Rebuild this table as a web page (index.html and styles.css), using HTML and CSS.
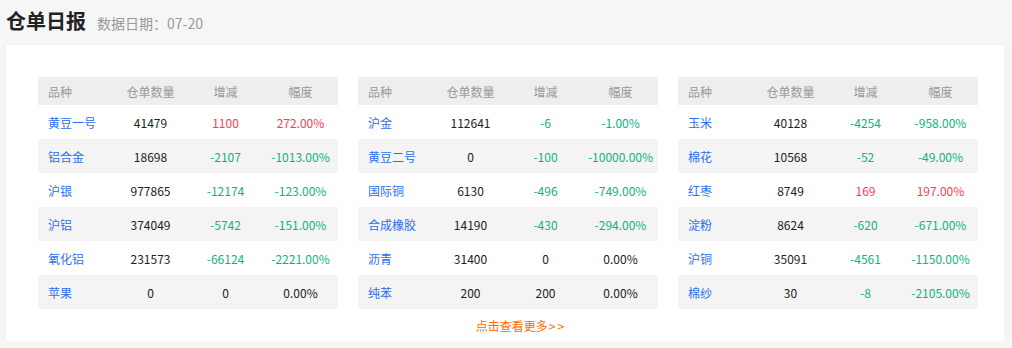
FILE: index.html
```html
<!DOCTYPE html>
<html lang="zh-CN">
<head>
<meta charset="utf-8">
<title>仓单日报</title>
<link rel="stylesheet" href="styles.css">
</head>
<body>
<div class="page">
  <div class="head">
    <h1 class="title">仓单日报</h1>
    <span class="date">数据日期：07-20</span>
  </div>
  <div class="card">
    <div class="tables">
      <table class="tb">
        <thead><tr><th>品种</th><th>仓单数量</th><th>增减</th><th>幅度</th></tr></thead>
        <tbody>
          <tr><td class="name">黄豆一号</td><td>41479</td><td class="up">1100</td><td class="up">272.00%</td></tr>
          <tr><td class="name">铝合金</td><td>18698</td><td class="down">-2107</td><td class="down">-1013.00%</td></tr>
          <tr><td class="name">沪银</td><td>977865</td><td class="down">-12174</td><td class="down">-123.00%</td></tr>
          <tr><td class="name">沪铝</td><td>374049</td><td class="down">-5742</td><td class="down">-151.00%</td></tr>
          <tr><td class="name">氧化铝</td><td>231573</td><td class="down">-66124</td><td class="down">-2221.00%</td></tr>
          <tr><td class="name">苹果</td><td>0</td><td>0</td><td>0.00%</td></tr>
        </tbody>
      </table>
      <table class="tb">
        <thead><tr><th>品种</th><th>仓单数量</th><th>增减</th><th>幅度</th></tr></thead>
        <tbody>
          <tr><td class="name">沪金</td><td>112641</td><td class="down">-6</td><td class="down">-1.00%</td></tr>
          <tr><td class="name">黄豆二号</td><td>0</td><td class="down">-100</td><td class="down">-10000.00%</td></tr>
          <tr><td class="name">国际铜</td><td>6130</td><td class="down">-496</td><td class="down">-749.00%</td></tr>
          <tr><td class="name">合成橡胶</td><td>14190</td><td class="down">-430</td><td class="down">-294.00%</td></tr>
          <tr><td class="name">沥青</td><td>31400</td><td>0</td><td>0.00%</td></tr>
          <tr><td class="name">纯苯</td><td>200</td><td>200</td><td>0.00%</td></tr>
        </tbody>
      </table>
      <table class="tb">
        <thead><tr><th>品种</th><th>仓单数量</th><th>增减</th><th>幅度</th></tr></thead>
        <tbody>
          <tr><td class="name">玉米</td><td>40128</td><td class="down">-4254</td><td class="down">-958.00%</td></tr>
          <tr><td class="name">棉花</td><td>10568</td><td class="down">-52</td><td class="down">-49.00%</td></tr>
          <tr><td class="name">红枣</td><td>8749</td><td class="up">169</td><td class="up">197.00%</td></tr>
          <tr><td class="name">淀粉</td><td>8624</td><td class="down">-620</td><td class="down">-671.00%</td></tr>
          <tr><td class="name">沪铜</td><td>35091</td><td class="down">-4561</td><td class="down">-1150.00%</td></tr>
          <tr><td class="name">棉纱</td><td>30</td><td class="down">-8</td><td class="down">-2105.00%</td></tr>
        </tbody>
      </table>
    </div>
    <div class="more-row"><a class="more" href="#">点击查看更多<span class="arrows">&gt;&gt;</span></a></div>
  </div>
</div>
</body>
</html>
```
FILE: styles.css
```css
html, body {
  margin: 0;
  padding: 0;
  background: #f6f6f6;
}
body {
  font-family: "Noto Sans CJK SC", "Microsoft YaHei", sans-serif;
  color: #333;
}
.page {
  padding: 0 8px 0 6px;
}
.head {
  display: flex;
  align-items: baseline;
  padding-top: 9px;
  height: 36px;
  box-sizing: border-box;
}
.title {
  margin: 0;
  font-size: 20px;
  line-height: 24px;
  font-weight: bold;
  color: #222;
}
.date {
  margin-left: 11px;
  font-size: 14px;
  color: #999;
}
.card {
  margin-top: 9px;
  width: 998px;
  background: #fff;
  box-shadow: 0 0 8px rgba(0, 0, 0, 0.03);
  padding: 32px 0 0 32px;
  box-sizing: border-box;
  height: 296px;
}
.tables {
  display: flex;
  gap: 20px;
}
.tb {
  width: 300px;
  border-collapse: collapse;
  table-layout: fixed;
  font-size: 12px;
}
.tb th {
  height: 28px;
  padding: 0;
  background: #eeeeee;
  color: #999;
  font-weight: normal;
  text-align: center;
}
.tb td {
  height: 34px;
  padding: 0;
  text-align: center;
  color: #222;
}
.tb th:first-child, .tb td:first-child {
  text-align: left;
  padding-left: 10px;
}
.tb tbody tr:nth-child(even) td {
  background: #f4f4f4;
}
.tb td.name {
  color: #2a6ff0;
}
.tb td.up {
  color: #ff3b55;
}
.tb td.down {
  color: #0db386;
}
.more-row {
  display: flex;
  justify-content: center;
  padding: 10px 0 0 0;
}
.more {
  font-size: 12px;
  line-height: 14px;
  color: #ff6a00;
  text-decoration: none;
}
.arrows {
  letter-spacing: 2px;
  margin-left: 1px;
}
```
